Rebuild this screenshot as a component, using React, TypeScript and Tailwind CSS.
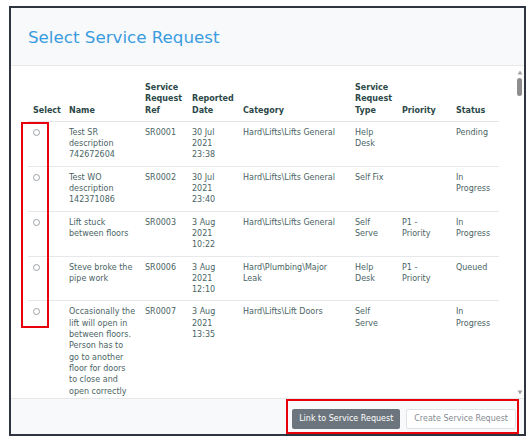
import React from "react";

interface ServiceRequest {
  name: string;
  ref: string;
  date: string[];
  category: string;
  type: string;
  priority: string;
  status: string;
}

const requests: ServiceRequest[] = [
  {
    name: "Test SR description 742672604",
    ref: "SR0001",
    date: ["30 Jul", "2021", "23:38"],
    category: "Hard\\Lifts\\Lifts General",
    type: "Help Desk",
    priority: "",
    status: "Pending",
  },
  {
    name: "Test WO description 142371086",
    ref: "SR0002",
    date: ["30 Jul", "2021", "23:40"],
    category: "Hard\\Lifts\\Lifts General",
    type: "Self Fix",
    priority: "",
    status: "In Progress",
  },
  {
    name: "Lift stuck between floors",
    ref: "SR0003",
    date: ["3 Aug", "2021", "10:22"],
    category: "Hard\\Lifts\\Lifts General",
    type: "Self Serve",
    priority: "P1 - Priority",
    status: "In Progress",
  },
  {
    name: "Steve broke the pipe work",
    ref: "SR0006",
    date: ["3 Aug", "2021", "12:10"],
    category: "Hard\\Plumbing\\Major Leak",
    type: "Help Desk",
    priority: "P1 - Priority",
    status: "Queued",
  },
  {
    name: "Occasionally the\nlift will open in\nbetween floors.\nPerson has to\ngo to another\nfloor for doors\nto close and\nopen correctly",
    ref: "SR0007",
    date: ["3 Aug", "2021", "13:35"],
    category: "Hard\\Lifts\\Lift Doors",
    type: "Self Serve",
    priority: "",
    status: "In Progress",
  },
];

const headers = [
  "Select",
  "Name",
  "Service Request Ref",
  "Reported Date",
  "Category",
  "Service Request Type",
  "Priority",
  "Status",
];

const widths = ["w-[36px]", "w-[76px]", "w-[47px]", "w-[51px]", "w-[112px]", "w-[47px]", "w-[54px]", "w-[48px]"];

const Scrollbar = () => (
  <div className="flex w-[9px] flex-col items-center pt-[4px] pb-[3px]">
    <svg width="6" height="5" viewBox="0 0 6 5">
      <path d="M3 0.5 L5.5 4.5 L0.5 4.5 Z" fill="#a3a3a3" />
    </svg>
    <div className="mt-[3px] h-[18px] w-[5px] rounded-[3px] bg-[#8e8e8e]" />
    <div className="flex-1" />
    <svg width="6" height="5" viewBox="0 0 6 5">
      <path d="M0.5 0.5 L5.5 0.5 L3 4.5 Z" fill="#a3a3a3" />
    </svg>
  </div>
);

const App: React.FC = () => {
  return (
    <div
      className="relative h-[440px] w-[532px] bg-white pt-[6px] pl-[9px]"
      style={{ fontFamily: '"DejaVu Sans", Verdana, sans-serif' }}
    >
      <div className="flex h-[430px] w-[517px] flex-col border-2 border-[#2f3540] bg-white">
        <div className="flex h-[58px] shrink-0 items-center border-b border-[#e7e9ec] bg-[#f8f9fa] px-[17px]">
          <h1 className="text-[16.7px] leading-[20px] text-[#3a9ce0]">Select Service Request</h1>
        </div>

        <div className="flex min-h-0 flex-1">
          <div className="min-w-0 flex-1 overflow-hidden pt-[16px] pl-[17px]">
            <table className="w-[471px] table-fixed border-collapse text-[8px] leading-[11.3px]">
              <colgroup>
                {widths.map((w, i) => (
                  <col key={i} className={w} />
                ))}
              </colgroup>
              <thead>
                <tr className="border-b border-[#e3e5e7]">
                  {headers.map((h) => (
                    <th
                      key={h}
                      className="px-[5px] pb-[5px] text-left align-bottom font-bold text-[#2c4848]"
                    >
                      {h}
                    </th>
                  ))}
                </tr>
              </thead>
              <tbody className="text-[#4a6464]">
                {requests.map((r) => (
                  <tr key={r.ref} className="border-b border-[#e6e8ea]">
                    <td className="px-[5px] py-[5px] align-top">
                      <span className="mt-[2px] block h-[7px] w-[7px] rounded-full border border-[#9ea3a6] bg-white" />
                    </td>
                    <td className="py-[5px] pr-[1px] pl-[5px] align-top whitespace-pre-line">{r.name}</td>
                    <td className="px-[5px] py-[5px] align-top">{r.ref}</td>
                    <td className="px-[5px] py-[5px] align-top">
                      {r.date.map((d) => (
                        <div key={d}>{d}</div>
                      ))}
                    </td>
                    <td className="px-[5px] py-[5px] align-top">{r.category}</td>
                    <td className="px-[5px] py-[5px] align-top">{r.type}</td>
                    <td className="px-[5px] py-[5px] align-top">{r.priority}</td>
                    <td className="px-[5px] py-[5px] align-top">{r.status}</td>
                  </tr>
                ))}
              </tbody>
            </table>
          </div>
          <Scrollbar />
        </div>

        <div className="flex h-[36px] shrink-0 items-start justify-end gap-[6px] border-t border-[#e5e7ea] bg-[#f8f9fa] pt-[10px] pr-[8px]">
          <button className="h-[20px] rounded-[2px] bg-[#6c757d] px-[7px] text-[8px] text-white">
            Link to Service Request
          </button>
          <button className="h-[20px] rounded-[2px] border border-[#e0e3e6] bg-white px-[7px] text-[8px] text-[#858b91]">
            Create Service Request
          </button>
        </div>
      </div>

      <div className="pointer-events-none absolute top-[122px] left-[21px] h-[206px] w-[28px] border-2 border-[#e8000b]" />
      <div className="pointer-events-none absolute top-[399px] left-[286px] h-[35px] w-[233px] border-2 border-[#e8000b]" />
    </div>
  );
};

export default App;
